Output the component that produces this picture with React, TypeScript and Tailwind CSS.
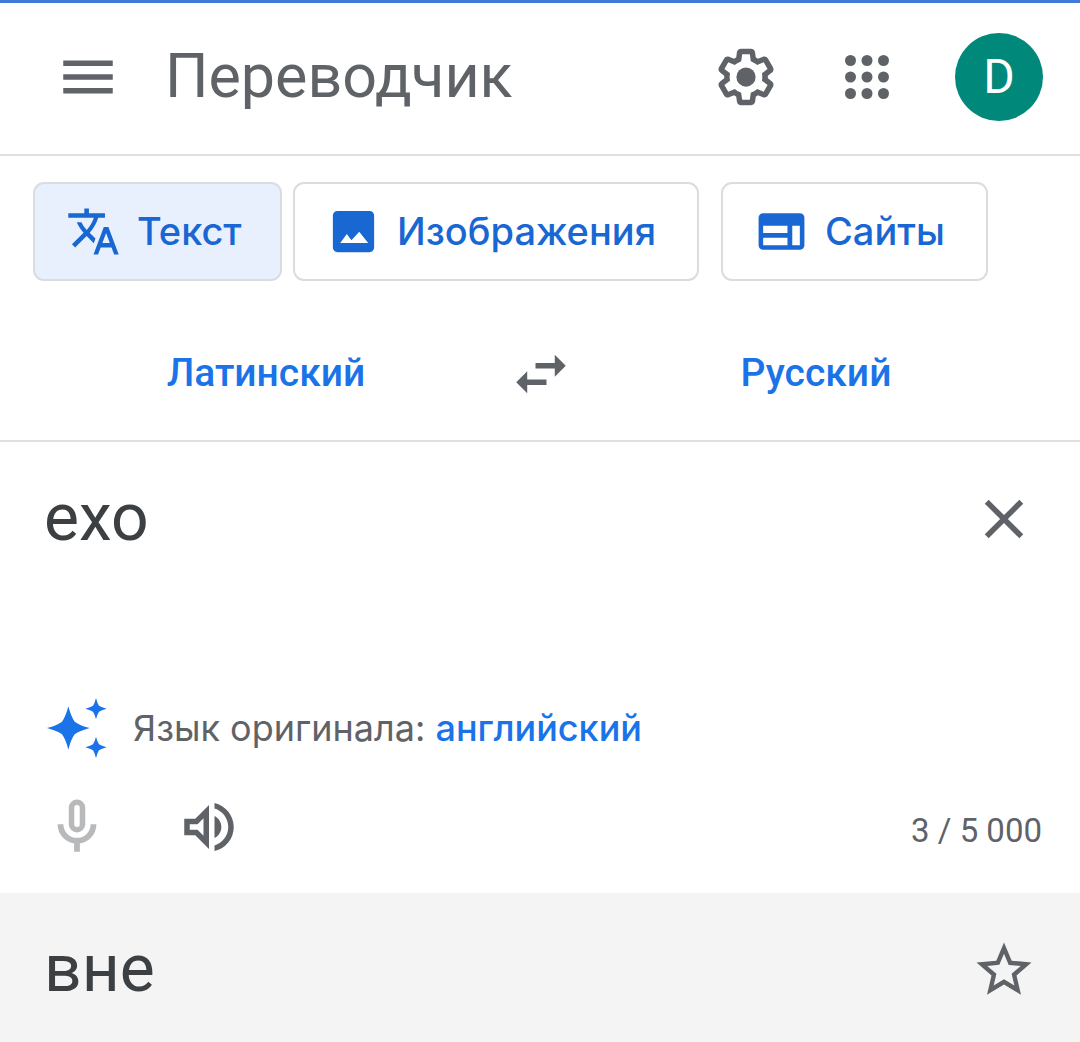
import { useState } from "react";
import type { ReactNode } from "react";

type IconProps = { children: ReactNode; className?: string; viewBox?: string };

function Icon({ children, className = "size-[66px]", viewBox = "0 0 24 24" }: IconProps) {
  return (
    <svg
      className={`${className} shrink-0`}
      viewBox={viewBox}
      fill="currentColor"
      aria-hidden="true"
    >
      {children}
    </svg>
  );
}

const tabs = [
  {
    id: "text",
    label: "Текст",
    width: "w-[249px] mr-[11px]",
    icon: (
      <path d="M12.87 15.07l-2.54-2.51.03-.03c1.74-1.94 2.98-4.17 3.71-6.53H17V4h-7V2H8v2H1v1.99h11.17C11.5 7.92 10.44 9.75 9 11.35 8.07 10.32 7.3 9.19 6.69 8h-2c.73 1.63 1.73 3.17 2.98 4.56l-5.09 5.02L4 19l5-5 3.11 3.11.76-2.04zM18.5 10h-2L12 22h2l1.12-3h4.75L21 22h2l-4.5-12zm-2.62 7l1.62-4.33L19.12 17h-3.24z" />
    ),
  },
  {
    id: "images",
    label: "Изображения",
    width: "w-[406px] mr-[22px]",
    icon: (
      <path
        fillRule="evenodd"
        d="M5 3h14a2 2 0 0 1 2 2v14a2 2 0 0 1-2 2H5a2 2 0 0 1-2-2V5a2 2 0 0 1 2-2zM6.2 17h12.2l-3.9-4.9-3.4 3.7-2-2.7z"
      />
    ),
  },
  {
    id: "sites",
    label: "Сайты",
    width: "w-[267px]",
    icon: (
      <path
        fillRule="evenodd"
        d="M4 4h16a2 2 0 0 1 2 2v12a2 2 0 0 1-2 2H4a2 2 0 0 1-2-2V6a2 2 0 0 1 2-2zM4 9.5v3.2h10.6V9.5zM4 14.7V18h10.6v-3.3zM16.7 9.5V18H20V9.5z"
      />
    ),
  },
];

const dots = [6, 12, 18];

export default function App() {
  const [activeTab, setActiveTab] = useState("text");
  const [text, setText] = useState("exo");

  return (
    <main className="relative flex min-h-screen flex-col bg-white font-['Roboto',sans-serif] text-[#5f6368]">
      {/* PROGRESS LINE */}
      <div className="absolute inset-x-0 top-0 h-[3px] bg-[#4179d8]" />

      {/* HEADER */}
      <header className="flex h-[156px] items-center border-b-2 border-[#e0e0e0] pr-[37px] pl-[55px]">
        <button aria-label="Главное меню">
          <Icon>
            <path d="M3 18h18v-2H3v2zm0-5h18v-2H3v2zm0-7v2h18V6H3z" />
          </Icon>
        </button>
        <h1 className="ml-11 flex-1 text-[61px]">Переводчик</h1>
        <div className="flex items-center gap-[55px]">
          <button aria-label="Настройки">
            <Icon>
              <path d="M13.85 22.25h-3.7c-.74 0-1.36-.54-1.45-1.27l-.27-1.89c-.27-.14-.53-.29-.79-.46l-1.8.72c-.7.26-1.47-.03-1.81-.65L2.2 15.53c-.35-.66-.2-1.44.36-1.88l1.53-1.19c-.01-.15-.02-.3-.02-.46 0-.15.01-.31.02-.46l-1.52-1.19c-.59-.45-.74-1.26-.37-1.88l1.85-3.19c.34-.62 1.11-.9 1.79-.63l1.81.73c.26-.17.52-.32.78-.46l.27-1.91c.09-.7.71-1.25 1.44-1.25h3.7c.74 0 1.36.54 1.45 1.27l.27 1.89c.27.14.53.29.79.46l1.8-.72c.71-.26 1.48.03 1.82.65l1.84 3.18c.36.66.2 1.44-.36 1.88l-1.52 1.19c.01.15.02.3.02.46s-.01.31-.02.46l1.52 1.19c.56.45.72 1.23.37 1.86l-1.86 3.22c-.34.62-1.11.9-1.8.63l-1.8-.72c-.26.17-.52.32-.78.46l-.27 1.91c-.1.68-.72 1.22-1.46 1.22zm-3.23-2h2.76l.37-2.55.53-.22c.44-.18.88-.44 1.34-.78l.45-.34 2.38.96 1.38-2.4-2.03-1.58.07-.56c.03-.26.06-.51.06-.78s-.03-.53-.06-.78l-.07-.56 2.03-1.58-1.39-2.4-2.39.96-.45-.35c-.42-.32-.87-.58-1.33-.77l-.52-.22-.37-2.55h-2.76l-.37 2.55-.53.21c-.44.19-.88.44-1.34.79l-.45.33-2.38-.95-1.39 2.39 2.03 1.58-.07.56a7 7 0 0 0-.06.79c0 .26.02.53.06.78l.07.56-2.03 1.58 1.38 2.4 2.39-.96.45.35c.43.33.86.58 1.33.77l.53.22.38 2.55z" />
              <circle cx="12" cy="12" r="3.5" />
            </Icon>
          </button>
          <button aria-label="Приложения">
            <Icon>
              {dots.map((y) => dots.map((x) => <circle key={`${x}-${y}`} cx={x} cy={y} r="2" />))}
            </Icon>
          </button>
          <button
            aria-label="Аккаунт"
            className="size-[88px] rounded-full bg-[#00897b] text-[48px] text-white"
          >
            D
          </button>
        </div>
      </header>

      {/* TABS */}
      <nav className="flex px-[33px] pt-[26px] pb-[26px]">
        {tabs.map((tab) => (
          <button
            key={tab.id}
            onClick={() => setActiveTab(tab.id)}
            className={`${tab.width} ${
              activeTab === tab.id ? "bg-[#e8f0fe]" : "bg-white"
            } flex h-[99px] items-center gap-4 rounded-[11px] border-2 border-[#dadce0] pl-[31px] font-['Inter',sans-serif] text-[38px] font-medium text-[#1967d2]`}
          >
            <Icon className="size-[55px]">{tab.icon}</Icon>
            {tab.label}
          </button>
        ))}
      </nav>

      {/* LANGUAGES */}
      <div className="flex h-[135px] items-center border-b-2 border-[#e0e0e0] pr-[22px] pl-6">
        <button className="flex-1 text-[39px] font-medium text-[#1a73e8]">Латинский</button>
        <button aria-label="Поменять языки местами">
          <Icon>
            <path d="M6.99 11L3 15l3.99 4v-3H14v-2H6.99v-3zM21 9l-3.99-4v3H10v2h7.01v3L21 9z" />
          </Icon>
        </button>
        <button className="flex-1 text-[39px] font-medium text-[#1a73e8]">Русский</button>
      </div>

      {/* SOURCE */}
      <section className="flex flex-col pb-[33px]">
        <div className="flex items-start pt-8 pr-[43px] pl-11">
          <textarea
            aria-label="Исходный текст"
            className="h-[221px] min-w-0 flex-1 resize-none text-[66px] leading-[88px] text-[#3c4043] outline-none"
            spellCheck={false}
            value={text}
            onChange={(e) => setText(e.target.value)}
          />
          <button aria-label="Удалить исходный текст" className="mt-3" onClick={() => setText("")}>
            <Icon>
              <path d="M19 6.41L17.59 5 12 10.59 6.41 5 5 6.41 10.59 12 5 17.59 6.41 19 12 13.41 17.59 19 19 17.59 13.41 12z" />
            </Icon>
          </button>
        </div>
        <div className="flex h-[66px] items-center gap-[26px] pl-[47px] font-['Inter',sans-serif] text-[36px]">
          <Icon className="size-[60px] text-[#1a73e8]" viewBox="0 0 180 180">
            <path d="M64 25Q72 56 83 71Q98 82 128 90Q98 98 83 109Q72 124 64 155Q56 124 45 109Q30 98 0 90Q30 82 45 71Q56 56 64 25zM147 0Q151 16 156 23Q163 28 179 32Q163 36 156 41Q151 48 147 64Q143 48 138 41Q131 36 115 32Q131 28 138 23Q143 16 147 0zM147 116Q151 132 156 139Q163 144 179 148Q163 152 156 157Q151 164 147 180Q143 164 138 157Q131 152 115 148Q131 144 138 139Q143 132 147 116z" />
          </Icon>
          <p>
            Язык оригинала:{" "}
            <a href="#" className="font-medium text-[#1a73e8]">
              английский
            </a>
          </p>
        </div>
        <div className="mt-[33px] flex h-[66px] items-end pr-[38px] pl-11">
          <button aria-label="Голосовой ввод" className="text-[#b7b9bb]">
            <Icon viewBox="0 1 24 24">
              <g fill="none" stroke="currentColor">
                <rect x="10" y="4" width="4" height="10" rx="2" strokeWidth="2" />
                <path d="M6 12a6 6 0 0 0 12 0M12 18v4" strokeWidth="2.1" />
              </g>
            </Icon>
          </button>
          <button aria-label="Прослушать" className="ml-[66px]">
            <Icon>
              <path d="M3 9v6h4l5 5V4L7 9H3zm7-.17v6.34L7.83 13H5v-2h2.83L10 8.83zM16.5 12c0-1.77-1.02-3.29-2.5-4.03v8.05c1.48-.73 2.5-2.25 2.5-4.02zM14 3.23v2.06c2.89.86 5 3.54 5 6.71s-2.11 5.85-5 6.71v2.06c4.01-.91 7-4.49 7-8.77s-2.99-7.86-7-8.77z" />
            </Icon>
          </button>
          <span className="ml-auto text-[33px] leading-[58px]">{text.length} / 5 000</span>
        </div>
      </section>

      {/* TRANSLATION */}
      <section className="flex flex-1 items-start bg-[#f4f4f4] pt-8 pr-[43px] pl-11">
        <p className="flex-1 text-[66px] leading-[88px] text-[#3c4043]">вне</p>
        <button aria-label="Сохранить перевод" className="mt-3">
          <Icon>
            <path d="M22 9.24l-7.19-.62L12 2 9.19 8.63 2 9.24l5.46 4.73L5.82 21 12 17.27 18.18 21l-1.63-7.03L22 9.24zM12 15.4l-3.76 2.27 1-4.28-3.32-2.88 4.38-.38L12 6.1l1.71 4.04 4.38.38-3.32 2.88 1 4.28L12 15.4z" />
          </Icon>
        </button>
      </section>
    </main>
  );
}
